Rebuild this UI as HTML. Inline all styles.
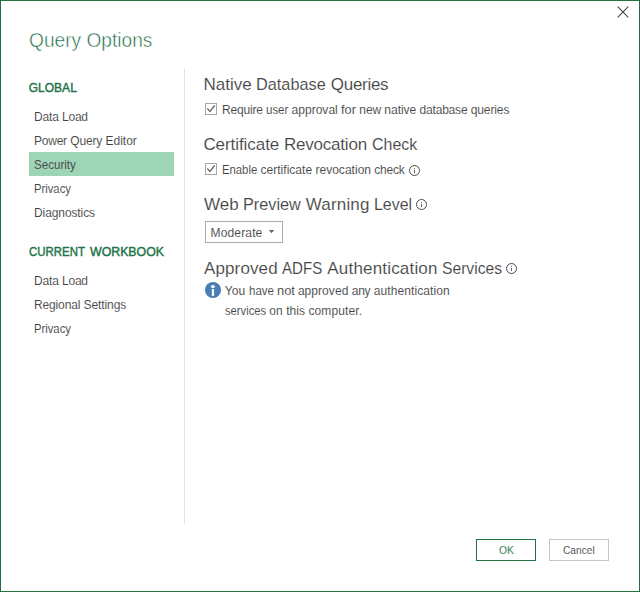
<!DOCTYPE html>
<html lang="en">
<head>
<meta charset="utf-8">
<title>Query Options</title>
<style>
html,body{margin:0;padding:0;background:#fff;}
body{width:640px;height:592px;overflow:hidden;position:relative;font-family:"Liberation Sans",sans-serif;color:#444;}
h1,h2,ul,li,p,label,button{margin:0;padding:0;font-weight:normal;font-family:inherit;list-style:none;}
.dlg{position:absolute;left:0;top:0;width:640px;height:592px;background:#fff;box-shadow:inset 0 0 0 1px #217346;}
.t{position:absolute;white-space:nowrap;line-height:1;color:#444;transform-origin:0 0;-webkit-text-stroke:0.08px #fff;}
#s3{-webkit-text-stroke-color:#9fd5b7;}
.close{position:absolute;left:615px;top:4px;width:16px;height:16px;border:0;background:none;}
.close svg{position:absolute;left:0;top:0;}
#title{color:#1a6b3f;-webkit-text-stroke:0.5px #fff;}
.grp{color:#217346;-webkit-text-stroke:0.4px #217346;}
.sec{-webkit-text-stroke:0.12px #fff;}
.w{display:inline-block;transform-origin:0 0;}
.wa{position:absolute;top:0;transform-origin:0 0;}
.selbg{position:absolute;left:29px;top:152px;width:145px;height:24px;background:#9fd5b7;}
.vline{position:absolute;left:184px;top:69px;width:1px;height:455px;background:#e1e1e1;}
.cb{position:absolute;width:12px;height:12px;background:#fff;box-shadow:inset 0 0 0 1px #a6a6a6;}
.cb svg{position:absolute;left:0;top:0;}
.dd{position:absolute;left:205px;top:221px;width:78px;height:22px;background:#fff;box-shadow:inset 0 0 0 1px #ababab;}
.dd svg{position:absolute;left:63px;top:8px;}
.info{position:absolute;}
.tip{position:absolute;left:204px;top:281px;}
.btn{position:absolute;top:539px;width:60px;height:22px;border:0;border-radius:0;background:#fff;box-shadow:inset 0 0 0 1px #c6c6c6;}
.btn.primary{box-shadow:inset 0 0 0 1px #217346;}
.btn.primary .t{color:#217346;}
</style>
</head>
<body>
<div class="dlg" role="dialog" aria-labelledby="title">
<button class="close" type="button" aria-label="Close"><svg width="16" height="16" viewBox="0 0 16 16" aria-hidden="true"><path d="M2.7 2.7 L13.3 13.3 M13.3 2.7 L2.7 13.3" stroke="#444" stroke-width="1.1" fill="none"/></svg></button>
<h1 class="t" id="title" style="left:29px;top:30px;font-size:20px;transform:scaleX(0.9566);">Query Options</h1>
<div class="selbg"></div>
<nav class="side" aria-label="Option categories">
<h2 class="t grp" id="g1" style="left:28.7px;top:82px;font-size:12px;letter-spacing:0.020px;">GLOBAL</h2>
<ul>
 <li class="t" id="s1" style="left:34px;top:111px;font-size:12px;word-spacing:-0.041px;"><span style="letter-spacing:-0.167px">Data</span> <span style="letter-spacing:-0.214px">Load</span></li>
 <li class="t" id="s2" style="left:34px;top:135px;font-size:12px;word-spacing:-0.041px;"><span style="letter-spacing:-0.227px">Power</span> <span style="letter-spacing:-0.124px">Query</span> <span style="letter-spacing:-0.007px">Editor</span></li>
 <li class="t" id="s3" style="left:33.8px;top:159px;font-size:12px;transform:scaleX(0.9661);" aria-current="page">Security</li>
 <li class="t" id="s4" style="left:34px;top:183px;font-size:12px;transform:scaleX(0.9373);">Privacy</li>
 <li class="t" id="s5" style="left:34px;top:207px;font-size:12px;word-spacing:-0.041px;"><span style="letter-spacing:-0.094px">Diagnostics</span></li>
</ul>
<h2 class="t grp" id="g2" style="left:0px;top:246px;font-size:12px;"><span class="wa" style="left:29.15px;transform:scaleX(0.9535)">CURRENT</span> <span class="wa" style="left:89.55px;transform:scaleX(1.0276)">WORKBOOK</span></h2>
<ul>
 <li class="t" id="s6" style="left:34px;top:275px;font-size:12px;word-spacing:-0.041px;"><span style="letter-spacing:-0.167px">Data</span> <span style="letter-spacing:-0.214px">Load</span></li>
 <li class="t" id="s7" style="left:34px;top:299px;font-size:12px;word-spacing:-0.041px;"><span style="letter-spacing:-0.140px">Regional</span> <span style="letter-spacing:-0.092px">Settings</span></li>
 <li class="t" id="s8" style="left:34px;top:323px;font-size:12px;transform:scaleX(0.9373);">Privacy</li>
</ul>
</nav>
<div class="vline"></div>
<main class="content">
<section>
 <h2 class="t sec" id="h1" style="left:203.5px;top:76px;font-size:17px;word-spacing:-0.062px;"><span style="letter-spacing:0.015px">Native</span> <span class="w" style="width:69.72px;transform:scaleX(0.9579)">Database</span> <span style="letter-spacing:-0.297px">Queries</span></h2>
 <span class="cb" style="left:205px;top:103px"><svg width="12" height="12" viewBox="0 0 12 12" aria-hidden="true"><path d="M2.3 5.35 L4.9 8.4 L9.75 2.5" stroke="#666" stroke-width="1.3" fill="none"/></svg></span>
 <label class="t" id="c1" style="left:222px;top:104px;font-size:12px;word-spacing:-0.041px;"><span style="letter-spacing:-0.195px">Require</span> <span class="w" style="width:22.32px;transform:scaleX(0.9563)">user</span> <span style="letter-spacing:0.019px">approval</span> <span class="w" style="width:14.96px;transform:scaleX(1.0677)">for</span> <span style="letter-spacing:-0.092px">new</span> <span style="letter-spacing:-0.024px">native</span> <span style="letter-spacing:-0.191px">database</span> <span style="letter-spacing:-0.112px">queries</span></label>
</section>
<section>
 <h2 class="t sec" id="h2" style="left:203.4px;top:136px;font-size:17px;word-spacing:-0.062px;"><span style="letter-spacing:-0.066px">Certificate</span> <span style="letter-spacing:-0.195px">Revocation</span> <span class="w" style="width:45.32px;transform:scaleX(0.9405)">Check</span></h2>
 <span class="cb" style="left:205px;top:163px"><svg width="12" height="12" viewBox="0 0 12 12" aria-hidden="true"><path d="M2.3 5.35 L4.9 8.4 L9.75 2.5" stroke="#666" stroke-width="1.3" fill="none"/></svg></span>
 <label class="t" id="c2" style="left:222px;top:164px;font-size:12px;word-spacing:-0.041px;"><span class="w" style="width:35.20px;transform:scaleX(0.9417)">Enable</span> <span style="letter-spacing:0.024px">certificate</span> <span style="letter-spacing:0.029px">revocation</span> <span style="letter-spacing:-0.251px">check</span></label>
 <svg class="info" style="left:408px;top:164px" width="13" height="13" viewBox="0 0 13 13" role="img" aria-label="Information"><circle cx="6.5" cy="6.5" r="5" fill="#fff" stroke="#4d4d4d" stroke-width="1"/><rect x="6" y="4" width="1" height="1" fill="#777"/><rect x="6" y="5.8" width="1" height="3.3" fill="#666"/></svg>
</section>
<section>
 <h2 class="t sec" id="h3" style="left:203.95px;top:196px;font-size:17px;word-spacing:-0.062px;"><span style="letter-spacing:0.028px">Web</span> <span class="w" style="width:57.77px;transform:scaleX(0.9554)">Preview</span> <span style="letter-spacing:0.158px">Warning</span> <span class="w" style="width:38.03px;transform:scaleX(0.9359)">Level</span></h2>
 <svg class="info" style="left:415px;top:198px" width="13" height="13" viewBox="0 0 13 13" role="img" aria-label="Information"><circle cx="6.5" cy="6.5" r="5" fill="#fff" stroke="#4d4d4d" stroke-width="1"/><rect x="6" y="4" width="1" height="1" fill="#777"/><rect x="6" y="5.8" width="1" height="3.3" fill="#666"/></svg>
 <div class="dd" role="combobox" aria-expanded="false"><span class="t" id="dd" style="left:5.5px;top:6px;font-size:12px;letter-spacing:0.157px;">Moderate</span><svg width="8" height="6" viewBox="0 0 8 6" aria-hidden="true"><path d="M1 1h5v1h-1v1h-1v1h-1v-1h-1v-1h-1z" fill="#6e6e6e"/></svg></div>
</section>
<section>
 <h2 class="t sec" id="h4" style="left:203.95px;top:260px;font-size:17px;word-spacing:-0.062px;"><span style="letter-spacing:0.137px">Approved</span> <span class="w" style="width:40.20px;transform:scaleX(0.8866)">ADFS</span> <span style="letter-spacing:0.181px">Authentication</span> <span class="w" style="width:60.04px;transform:scaleX(0.9210)">Services</span></h2>
 <svg class="info" style="left:505px;top:262px" width="13" height="13" viewBox="0 0 13 13" role="img" aria-label="Information"><circle cx="6.5" cy="6.5" r="5" fill="#fff" stroke="#4d4d4d" stroke-width="1"/><rect x="6" y="4" width="1" height="1" fill="#777"/><rect x="6" y="5.8" width="1" height="3.3" fill="#666"/></svg>
 <svg class="tip" width="18" height="18" viewBox="0 0 18 18" aria-hidden="true"><circle cx="9" cy="9" r="8" fill="#4a7db3"/><ellipse cx="8.95" cy="5.4" rx="2" ry="1.5" fill="#fff"/><rect x="7.8" y="8" width="2.3" height="6.9" fill="#fff"/></svg>
 <p class="t" id="p1" style="left:224.75px;top:285px;font-size:12px;word-spacing:-0.041px;"><span style="letter-spacing:0.066px">You</span> <span class="w" style="width:24.91px;transform:scaleX(0.9571)">have</span> <span class="w" style="width:17.88px;transform:scaleX(1.0716)">not</span> <span style="letter-spacing:0.058px">approved</span> <span style="letter-spacing:-0.229px">any</span> <span style="letter-spacing:0.106px">authentication</span></p>
 <p class="t" id="p2" style="left:224.75px;top:305px;font-size:12px;word-spacing:-0.041px;"><span class="w" style="width:41.10px;transform:scaleX(0.9337)">services</span> <span style="letter-spacing:0.229px">on</span> <span style="letter-spacing:0.039px">this</span> <span style="letter-spacing:0.128px">computer.</span></p>
</section>
</main>
<div class="footer">
 <button class="btn primary" type="button" style="left:476px"><span class="t" id="ok" style="left:22.5px;top:6px;font-size:11px;transform:scaleX(0.9378);">OK</span></button>
 <button class="btn" type="button" style="left:549px"><span class="t" id="ca" style="left:14.3px;top:6px;font-size:11px;transform:scaleX(0.9258);">Cancel</span></button>
</div>
</div>
</body>
</html>
